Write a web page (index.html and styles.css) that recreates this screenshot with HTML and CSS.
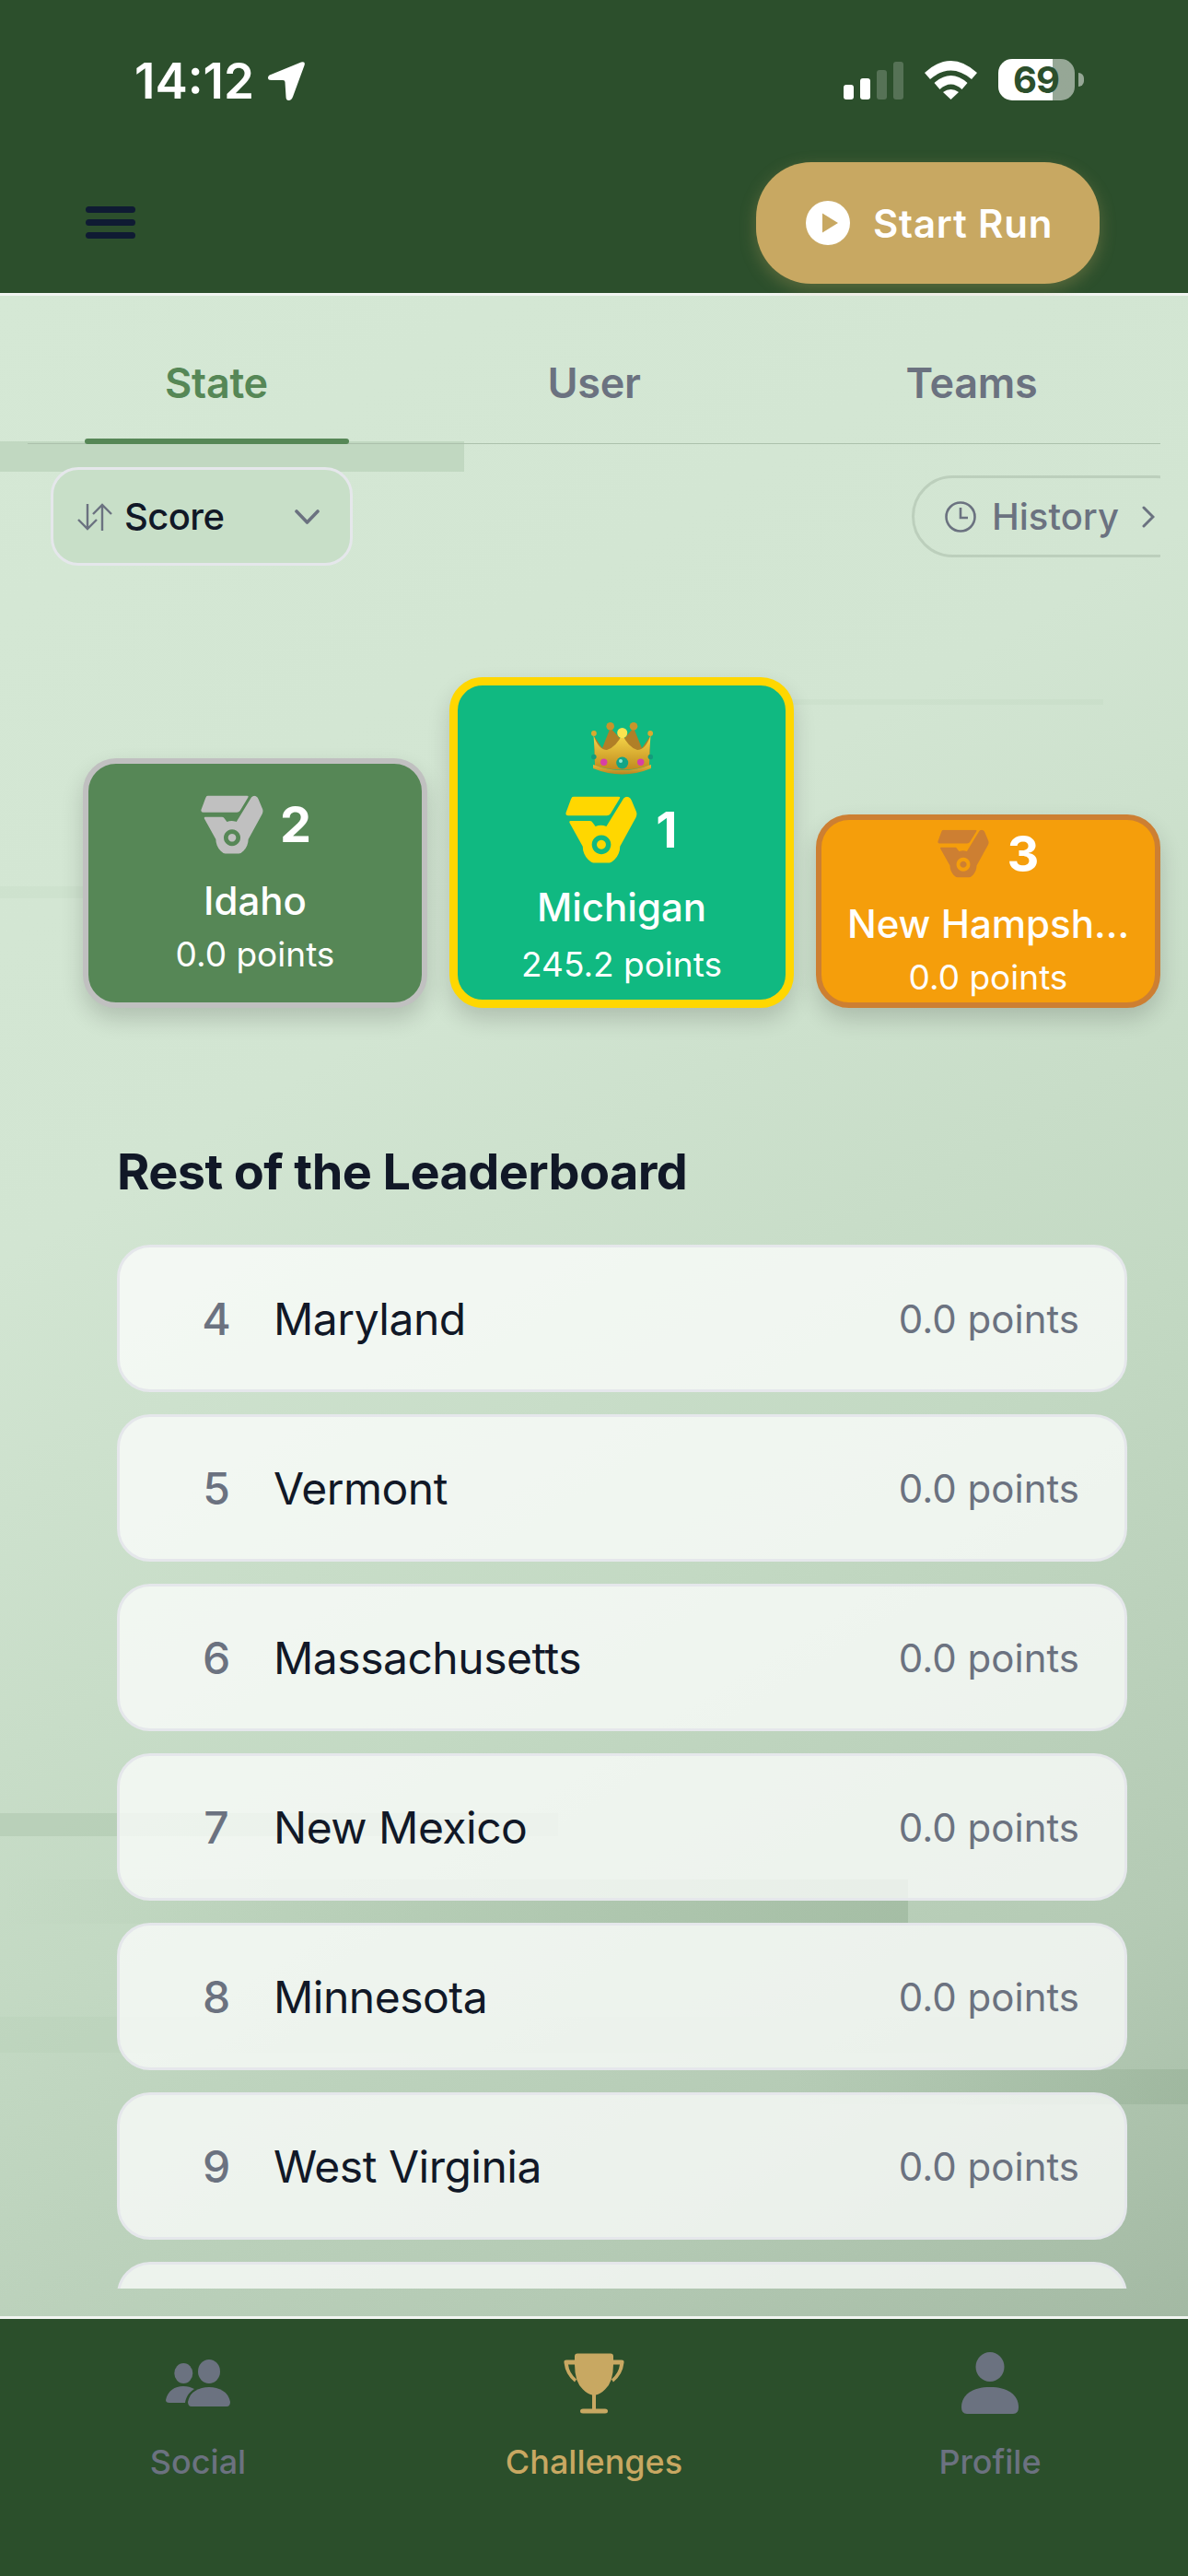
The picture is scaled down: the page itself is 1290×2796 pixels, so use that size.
FILE: index.html
```html
<!DOCTYPE html>
<html lang="en">
<head>
	<meta charset="UTF-8">
	<title>Leaderboard</title>
	<link rel="stylesheet" href="styles.css">
</head>
<body>
	<div class="app">
		<header class="top">
			<div class="status">
				<div class="status-left">
					<span class="time">14:12</span>
					<svg class="loc" viewBox="0 0 40 42"><path d="M36 0.5 Q41 -1 39.5 4 L27 38 Q25.5 42 22.5 42 Q19.5 42 19.5 38 L18.5 22 Q18.5 20 16 20 L3.5 20 Q0 20 0 17.5 Q0 15 3 14Z" fill="#fff"/></svg>
				</div>
				<div class="status-right">
					<div class="signal">
						<i class="bar bar1"></i>
						<i class="bar bar2"></i>
						<i class="bar bar3 off"></i>
						<i class="bar bar4 off"></i>
					</div>
					<svg class="wifi" viewBox="0 0 57 42">
						<path d="M0 13 Q28.5 -13 57 13 L51 20 Q28.5 1 6 20Z" fill="#fff"/>
						<path d="M10.5 24 Q28.5 8 46.500 24 L40.500 31 Q28.500 20 16.500 31Z" fill="#fff"/>
						<path d="M20 34 Q28.500 28 37 34 L28.500 42Z" fill="#fff"/>
					</svg>
					<div class="battery">69</div>
					<i class="battery-tip"></i>
				</div>
			</div>
			<div class="toolbar">
				<button class="menu"><span></span><span></span><span></span></button>
				<button class="start">
					<svg class="play" viewBox="0 0 48 48"><circle cx="24" cy="24" r="24" fill="#fff"/><path d="M18 13.500 L35 24 L18 34.500Z" fill="#c8a862"/></svg>
					Start Run
				</button>
			</div>
		</header>

		<main class="board">
			<i class="ghost ghost-a"></i>
			<i class="ghost ghost-b"></i>
			<i class="ghost ghost-c"></i>
			<i class="ghost ghost-d"></i>
			<i class="ghost ghost-e"></i>
			<i class="ghost ghost-f"></i>
			<i class="ghost ghost-g"></i>

			<nav class="tabs">
				<a class="tab active">State</a>
				<a class="tab">User</a>
				<a class="tab">Teams</a>
			</nav>

			<div class="controls">
				<div class="sort">
					<svg class="sort-icon" viewBox="0 0 38 30"><path d="M11 1 V28 M1 18 L11 28 L21 18 M27 30 V2 M17 12 L27 2 L37 12" fill="none" stroke="#6b7280" stroke-width="2.400"/></svg>
					<span class="sort-label">Score</span>
					<svg class="chev" viewBox="0 0 27 16"><path d="M2 2 L13.500 14 L25 2" fill="none" stroke="#6b7280" stroke-width="3.600" stroke-linecap="round" stroke-linejoin="round"/></svg>
				</div>
				<div class="history">
					<svg class="clock" viewBox="0 0 34 34"><circle cx="17" cy="17" r="15.500" fill="none" stroke="#6b7280" stroke-width="2.600"/><path d="M17 7 V18 H25" fill="none" stroke="#6b7280" stroke-width="2.600"/></svg>
					<span>History</span>
					<svg class="more" viewBox="0 0 14 24"><path d="M2 2 L12 12 L2 22" fill="none" stroke="#6b7280" stroke-width="3" stroke-linecap="round"/></svg>
				</div>
			</div>

			<section class="podium">
				<div class="place second">
					<div class="rank">
						<svg class="medal" viewBox="0 0 79 73"><use href="#medal"/></svg>
						<b>2</b>
					</div>
					<div class="place-name">Idaho</div>
					<div class="place-pts">0.0 points</div>
				</div>
				<div class="place first">
					<svg class="crown" viewBox="0 0 67 58">
						<defs>
							<linearGradient id="crownFront" x1="0" y1="0" x2="0" y2="1"><stop offset="0" stop-color="#f7d84a"/><stop offset="1" stop-color="#c08a1e"/></linearGradient>
							<linearGradient id="crownBand" x1="0" y1="0" x2="0" y2="1"><stop offset="0" stop-color="#e8b93a"/><stop offset="1" stop-color="#b5841f"/></linearGradient>
						</defs>
						<path d="M3 15 L12 28 L20.700 6 L33.700 20 L46 6 L55 28 L64 15 L63 46 H4Z" fill="#b07f27"/>
						<circle cx="20.700" cy="4.300" r="4.300" fill="#c8942a"/>
						<circle cx="46" cy="4.300" r="4.300" fill="#c8942a"/>
						<path d="M4 47 Q4 30 2.500 14 Q8 30 17 30 Q27 27 33.700 13 Q40 27 50 30 Q59 30 64.500 14 Q63 30 63 47 Q33.500 56 4 47Z" fill="url(#crownFront)"/>
						<circle cx="2.900" cy="12" r="2.900" fill="#dba92e"/>
						<circle cx="64.200" cy="12" r="2.900" fill="#dba92e"/>
						<circle cx="33.700" cy="11.500" r="5.500" fill="#fbe44f"/>
						<circle cx="2.800" cy="37.500" r="2.800" fill="#149b7c"/>
						<circle cx="64.400" cy="37.500" r="2.800" fill="#149b7c"/>
						<circle cx="13.700" cy="43.300" r="3.700" fill="#d83fa5"/>
						<circle cx="53.700" cy="43.300" r="3.700" fill="#d83fa5"/>
						<circle cx="33.700" cy="44" r="6.500" fill="#12a486"/>
						<circle cx="32" cy="42" r="2" fill="#8fe8d2"/>
						<path d="M2 46 Q33.500 58 65 46 L65 50 Q33.500 63 2 50Z" fill="url(#crownBand)"/>
					</svg>
					<div class="rank">
						<svg class="medal" viewBox="0 0 79 73"><use href="#medal"/></svg>
						<b>1</b>
					</div>
					<div class="place-name">Michigan</div>
					<div class="place-pts">245.2 points</div>
				</div>
				<div class="place third">
					<div class="rank">
						<svg class="medal" viewBox="0 0 79 73"><use href="#medal"/></svg>
						<b>3</b>
					</div>
					<div class="place-name">New Hampsh...</div>
					<div class="place-pts">0.0 points</div>
				</div>
			</section>

			<section class="rest">
				<h2>Rest of the Leaderboard</h2>
				<div class="rows">
					<div class="row"><span class="num">4</span><span class="name">Maryland</span><span class="pts">0.0 points</span></div>
					<div class="row"><span class="num">5</span><span class="name">Vermont</span><span class="pts">0.0 points</span></div>
					<div class="row"><span class="num">6</span><span class="name">Massachusetts</span><span class="pts">0.0 points</span></div>
					<div class="row"><span class="num">7</span><span class="name">New Mexico</span><span class="pts">0.0 points</span></div>
					<div class="row"><span class="num">8</span><span class="name">Minnesota</span><span class="pts">0.0 points</span></div>
					<div class="row"><span class="num">9</span><span class="name">West Virginia</span><span class="pts">0.0 points</span></div>
					<div class="row"></div>
				</div>
			</section>
		</main>

		<footer class="tabbar">
			<a class="bar-item">
				<svg class="bar-icon social" viewBox="0 0 71 52">
					<ellipse cx="47" cy="14" rx="12" ry="13"/>
					<ellipse cx="19.300" cy="16" rx="10" ry="11"/>
					<path d="M24 47 C26 36 36 31 47 31 C58 31 68 36 70 47 Q70 52 66 52 H28 Q24 52 24 47Z"/>
					<path d="M0 45 C2 35 10 30 19 30 C24 30 27 31 31 33 C26 36 22 41 21 48 H4 Q0 48 0 45Z"/>
				</svg>
				<span>Social</span>
			</a>
			<a class="bar-item current">
				<svg class="bar-icon trophy" viewBox="0 0 66 66">
					<path d="M15 1 H51 Q54 1 54 4 V8 H63 Q66 8 65.500 11 Q64 24 54 32 L52 29 Q60 22 61 13 H54 Q54 32 45 40 Q40 45 35 46 V61 H45 Q48 61 48 63.500 Q48 66 45 66 H21 Q18 66 18 63.500 Q18 61 21 61 H31 V46 Q26 45 21 40 Q12 32 12 13 H5 Q6 22 14 29 L12 32 Q2 24 0.500 11 Q0 8 3 8 H12 V4 Q12 1 15 1Z"/>
				</svg>
				<span>Challenges</span>
			</a>
			<a class="bar-item">
				<svg class="bar-icon person" viewBox="0 0 62 67">
					<ellipse cx="31" cy="16" rx="15.500" ry="16"/>
					<path d="M0 60 C0 46 12 38 31 38 C50 38 62 46 62 60 Q62 67 56 67 H6 Q0 67 0 60Z"/>
				</svg>
				<span>Profile</span>
			</a>
		</footer>
	</div>

	<!-- shared medal drawing, tinted with currentColor by each podium card -->
	<svg class="defs" width="0" height="0">
		<symbol id="medal" viewBox="0 0 79 73">
			<path fill="currentColor" d="M9 0 H58 Q61 0 59.500 2.500 L49.500 19 Q48 21 45.500 21 H3 Q0 21 0.500 18 L6 3 Q7 0 9 0Z"/>
			<path fill="currentColor" fill-rule="evenodd" d="M5.500 27 H27 Q29 27 30 29 L33 33 Q39 30.500 45 33 L64 2 Q67 -1 70 1 Q72 2 73 5 L78 17 Q79 20 77.500 23 L60 55 A20.500 20.500 0 0 1 19 55 L4.500 29 Q4 27 5.500 27Z M39.500 42.500 a10.500 10.500 0 1 0 0.010 0Z M39.500 48 a5 5 0 1 1 -0.010 0Z"/>
		</symbol>
	</svg>
</body>
</html>
```

FILE: styles.css
```css
*{
	margin: 0;
	padding: 0;
	box-sizing: border-box;
}
body{
	width: 1290px;
	height: 2796px;
	overflow: hidden;
	font-family: Inter, "Liberation Sans", sans-serif;
	color: #111827;
}
.app{
	display: flex;
	flex-direction: column;
	height: 2796px;
}
.defs{
	position: absolute;
}

/* header */
.top{
	height: 321px;
	flex: none;
	background: #2c4f2c;
	border-bottom: 3px solid #f1f5f1;
}
.status{
	display: flex;
	justify-content: space-between;
	align-items: flex-start;
	height: 176px;
	padding: 60px 113px 0 146px;
}
.status-left{
	display: flex;
	align-items: center;
	gap: 15px;
}
.time{
	color: #fff;
	font-size: 53px;
	font-weight: 600;
	line-height: 56px;
}
.loc{
	width: 40px;
	height: 42px;
}
.status-right{
	display: flex;
	align-items: center;
	margin-top: 4px;
}
.signal{
	display: flex;
	align-items: flex-end;
	gap: 7px;
	height: 41px;
	margin-top: 2px;
}
.bar{
	width: 11px;
	border-radius: 3px;
	background: #fff;
}
.bar1{ height: 16px; }
.bar2{ height: 23px; }
.bar3{ height: 32px; }
.bar4{ height: 41px; }
.bar.off{
	background: rgba(255,255,255,.2);
}
.wifi{
	width: 57px;
	height: 42px;
	margin-left: 23px;
}
.battery{
	width: 83px;
	height: 45px;
	margin-left: 23px;
	padding-left: 16px;
	border-radius: 15px;
	background: linear-gradient(90deg, #fff 59px, rgba(255,255,255,.5) 59px);
	color: #2c4f2c;
	font-size: 40px;
	font-weight: 700;
	line-height: 45px;
	letter-spacing: -1px;
}
.battery-tip{
	width: 6px;
	height: 15px;
	margin-left: 4px;
	border-radius: 0 6px 6px 0;
	background: rgba(255,255,255,.5);
}
.toolbar{
	display: flex;
	justify-content: space-between;
	align-items: flex-start;
	padding: 0 96px 0 93px;
}
.menu{
	display: flex;
	flex-direction: column;
	gap: 7px;
	width: 54px;
	margin-top: 48px;
	border: 0;
	background: none;
}
.menu span{
	height: 7px;
	border-radius: 4px;
	background: #0f1b33;
}
.start{
	display: flex;
	align-items: center;
	gap: 25px;
	width: 373px;
	height: 132px;
	padding-left: 54px;
	border: 0;
	border-radius: 60px;
	background: #c8a862;
	box-shadow: 0 6px 18px rgba(200,168,98,.3);
	color: #fff;
	font-family: inherit;
	font-size: 42px;
	font-weight: 600;
	letter-spacing: .8px;
}
.play{
	width: 48px;
	height: 48px;
}

/* content */
.board{
	position: relative;
	flex: 1;
	overflow: hidden;
	background: linear-gradient(148deg, #d5e8d5 0%, #d2e5d2 35%, #c3d9c3 62%, #b4cab4 85%, #a3b9a3 100%);
}
.board > *{
	position: relative;
}
/* leftover paint streaks behind the list */
.board > .ghost{
	position: absolute;
	display: block;
}
.ghost-a{ left: 0; top: 158px; width: 504px; height: 33px; background: #c1d8c1; }
.ghost-b{ left: 0; top: 1647px; width: 606px; height: 25px; background: rgba(150,180,150,.28); }
.ghost-c{ left: 0; top: 1719px; width: 986px; height: 48px; background: linear-gradient(90deg, rgba(150,180,150,0), rgba(130,160,130,.35)); }
.ghost-d{ left: 0; top: 1868px; width: 1105px; height: 39px; background: rgba(170,195,170,.14); }
.ghost-e{ left: 860px; top: 1925px; width: 430px; height: 38px; background: linear-gradient(90deg, rgba(130,160,130,0), rgba(130,160,130,.3)); }
.ghost-f{ left: 860px; top: 438px; width: 338px; height: 6px; background: rgba(170,195,170,.1); }
.ghost-g{ left: 0; top: 641px; width: 90px; height: 13px; background: rgba(170,195,170,.12); }

.tabs{
	display: flex;
	height: 161px;
	margin: 0 30px;
	border-bottom: 1px solid #acc1ac;
}
.tab{
	position: relative;
	flex: 1;
	padding-top: 68px;
	color: #6b7280;
	font-size: 45px;
	font-weight: 600;
	line-height: 54px;
	letter-spacing: -.3px;
	text-align: center;
}
.tab.active{
	color: #568756;
}
.tab.active::after{
	content: "";
	position: absolute;
	left: 62px;
	bottom: -1px;
	width: 287px;
	height: 6px;
	border-radius: 3px;
	background: #568756;
}
.controls{
	display: flex;
	justify-content: space-between;
	align-items: center;
	height: 107px;
	margin: 25px 30px 0 55px;
	overflow: hidden;
}
.sort{
	display: flex;
	align-items: center;
	width: 328px;
	height: 107px;
	padding: 0 33px 0 26px;
	border: 3px solid #e5e7eb;
	border-radius: 30px;
	background: #c8dfc8;
}
.sort-icon{
	width: 38px;
	height: 30px;
}
.sort-label{
	flex: 1;
	margin-left: 13px;
	font-size: 40px;
	font-weight: 500;
	letter-spacing: -.6px;
}
.chev{
	width: 27px;
	height: 16px;
}
.history{
	display: flex;
	align-items: center;
	flex: none;
	width: 310px;
	height: 89px;
	margin-right: -40px;
	padding-left: 33px;
	border: 3px solid #bccfbc;
	border-radius: 45px;
	color: #6b7280;
	font-size: 40px;
	font-weight: 500;
}
.clock{
	width: 34px;
	height: 34px;
	margin-right: 17px;
}
.more{
	width: 14px;
	height: 24px;
	margin-left: 25px;
}

/* top three */
.podium{
	display: flex;
	align-items: flex-end;
	gap: 24px;
	height: 359px;
	margin: 121px 30px 0 90px;
}
.place{
	display: flex;
	flex-direction: column;
	align-items: center;
	justify-content: center;
	flex: none;
	width: 374px;
	border-style: solid;
	border-radius: 36px;
	color: #fff;
	box-shadow: 0 12px 24px rgba(0,0,0,.16);
}
.second{
	height: 271px;
	padding-top: 3px;
	border-width: 6px;
	border-color: #c0c0c0;
	background: #568756;
}
.first{
	height: 359px;
	padding-top: 24px;
	border-width: 9px;
	border-color: #ffd700;
	background: #10b981;
}
.third{
	height: 210px;
	border-width: 6px;
	border-color: #cd7f32;
	background: #f59e0b;
}
.crown{
	width: 67px;
	height: 58px;
	margin-bottom: 22px;
}
.rank{
	display: flex;
	align-items: center;
	gap: 20px;
	font-size: 54px;
	line-height: 63px;
}
.second .rank{
	gap: 18px;
	margin-left: 2px;
}
.medal{
	width: 68px;
	height: 64px;
}
.second .medal{ color: #c0c0c0; }
.first .medal{
	width: 78px;
	height: 73px;
	color: #ffd700;
}
.third .medal{
	width: 56px;
	height: 53px;
	color: #cd7f32;
}
.place-name{
	margin-top: 25px;
	font-size: 42px;
	font-weight: 500;
	line-height: 52px;
	white-space: nowrap;
}
.first .place-name{
	margin-top: 22px;
}
.third .place-name{
	margin-top: 19px;
}
.place-pts{
	margin-top: 10px;
	font-size: 37px;
	line-height: 44px;
}
.first .place-pts{
	margin-top: 14px;
}

/* everyone else */
.rest{
	padding: 0 66px 0 127px;
}
.rest h2{
	margin-top: 144px;
	font-size: 54px;
	font-weight: 700;
	line-height: 68px;
	letter-spacing: -.6px;
	color: #111827;
}
.rows{
	display: flex;
	flex-direction: column;
	gap: 24px;
	height: 1133px;
	margin-top: 45px;
	overflow: hidden;
}
.row{
	display: flex;
	align-items: center;
	flex: none;
	height: 160px;
	padding: 0 49px 0 77px;
	border: 3px solid #e5e7eb;
	border-radius: 36px;
	background: rgba(255,255,255,.74);
}
.num{
	width: 56px;
	margin-right: 34px;
	color: #6b7280;
	font-size: 48px;
	font-weight: 500;
	text-align: center;
}
.name{
	flex: 1;
	font-size: 48px;
	font-weight: 400;
	letter-spacing: -.5px;
}
.pts{
	color: #6b7280;
	font-size: 42px;
}

/* bottom navigation */
.tabbar{
	display: flex;
	flex: none;
	height: 282px;
	background: #2b4f2b;
	border-top: 3px solid #f1f5f1;
}
.bar-item{
	display: flex;
	flex-direction: column;
	align-items: center;
	flex: 1;
	height: 180px;
	padding-top: 36px;
	color: #6b7280;
	font-size: 36px;
	font-weight: 500;
}
.bar-item.current{
	color: #c8a862;
}
.bar-icon{
	display: block;
	height: 67px;
	margin-bottom: 30px;
	fill: currentColor;
}
.social{
	width: 71px;
	height: 52px;
	margin: 7px 0 38px;
}
.trophy{
	width: 66px;
}
.person{
	width: 62px;
}
```
